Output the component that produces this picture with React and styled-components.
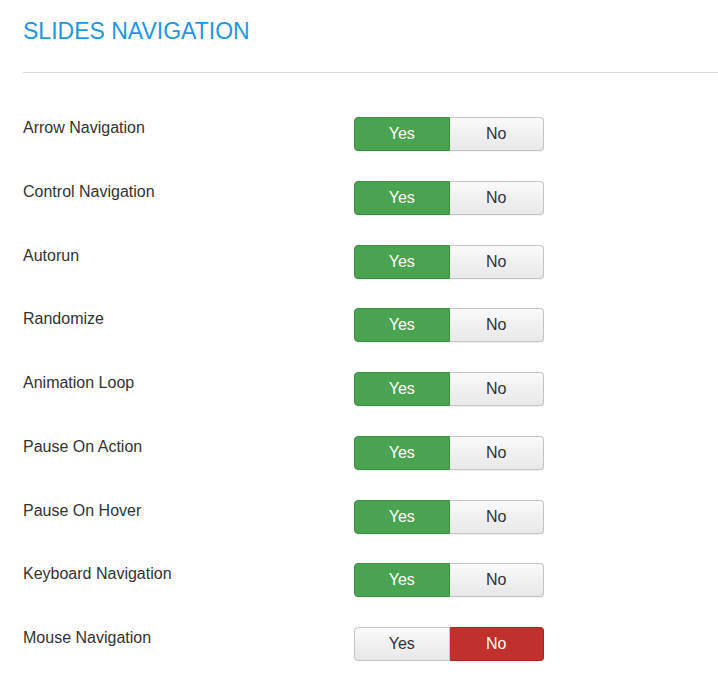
import styled, { createGlobalStyle } from "styled-components";

const GlobalStyle = createGlobalStyle`
  body {
    margin: 0;
    background: #fff;
    font-family: "Liberation Sans", Arial, sans-serif;
  }
`;

const Page = styled.div`
  padding: 18px 0 0 23px;
`;

const Title = styled.h2`
  margin: 0;
  font-size: 23px;
  line-height: 27px;
  font-weight: normal;
  color: #1d97e2;
`;

const Rule = styled.div`
  height: 1px;
  background: #dcdcdc;
  margin: 27px 0 44px;
`;

const Form = styled.div`
  display: flex;
  flex-direction: column;
  gap: 29.75px;
`;

const Row = styled.div`
  display: flex;
  align-items: flex-start;
`;

const Label = styled.div`
  width: 331px;
  padding-top: 2px;
  font-size: 16px;
  line-height: 18px;
  color: #333;
`;

const Group = styled.div`
  display: flex;
  width: 190px;
  height: 34px;
  border-radius: 4px;
  box-shadow: 0 1px 1px rgba(0, 0, 0, 0.06);
`;

const Option = styled.div`
  flex: 1;
  display: flex;
  align-items: center;
  justify-content: center;
  font-size: 16px;
  border: 1px solid;
  color: ${(p) => (p.$active ? "#fff" : "#333")};
  background: ${(p) =>
    p.$active === "yes"
      ? "#4aa350"
      : p.$active === "no"
      ? "#c0302c"
      : "linear-gradient(#fafafa, #e8e8e8)"};
  border-color: ${(p) =>
    p.$active === "yes"
      ? "#3e8e44"
      : p.$active === "no"
      ? "#a52824"
      : "#c4c4c4"};
  &:first-child {
    border-radius: 4px 0 0 4px;
  }
  &:last-child {
    border-radius: 0 4px 4px 0;
    border-left: none;
  }
`;

const settings = [
  ["Arrow Navigation", true],
  ["Control Navigation", true],
  ["Autorun", true],
  ["Randomize", true],
  ["Animation Loop", true],
  ["Pause On Action", true],
  ["Pause On Hover", true],
  ["Keyboard Navigation", true],
  ["Mouse Navigation", false],
];

const App = () => {
  return (
    <>
      <GlobalStyle />
      <Page>
        <Title>SLIDES NAVIGATION</Title>
        <Rule />
        <Form>
          {settings.map(([label, on]) => (
            <Row key={label}>
              <Label>{label}</Label>
              <Group>
                <Option $active={on ? "yes" : undefined}>Yes</Option>
                <Option $active={on ? undefined : "no"}>No</Option>
              </Group>
            </Row>
          ))}
        </Form>
      </Page>
    </>
  );
};

export default App;
